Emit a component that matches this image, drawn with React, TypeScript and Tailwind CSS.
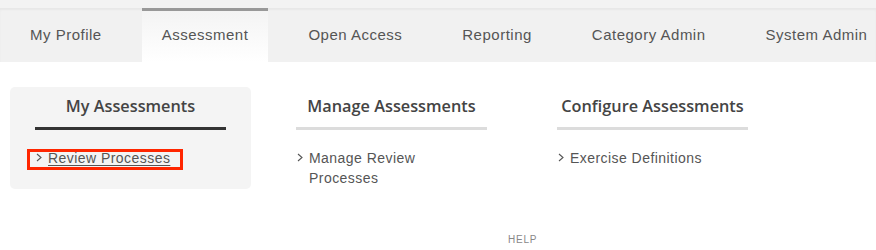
import React from 'react';

const tabs = ['My Profile', 'Assessment', 'Open Access', 'Reporting', 'Category Admin', 'System Admin'];

const columns = [
  { title: 'My Assessments', links: ['Review Processes'], active: true },
  { title: 'Manage Assessments', links: ['Manage Review Processes'], active: false },
  { title: 'Configure Assessments', links: ['Exercise Definitions'], active: false },
];

function Chevron() {
  return (
    <svg width="6" height="9" viewBox="0 0 6 9" className="shrink-0 mt-[5px]">
      <polyline points="1,1 5,4.5 1,8" fill="none" stroke="#555" strokeWidth="1.1" />
    </svg>
  );
}

export default function App() {
  return (
    <div className="w-[876px] h-[250px] bg-white overflow-hidden font-['Liberation_Sans',Arial,sans-serif]">
      <div className="h-[8px] bg-[#f3f3f3]" />
      <nav className="h-[54px] bg-[#f1f1f1] flex gap-5 pl-2.5 shadow-[inset_0_2px_2px_rgba(0,0,0,0.04)]">
        {tabs.map((t) => (
          <div
            key={t}
            className={
              'px-5 shrink-0 whitespace-nowrap flex items-center border-t-[3px] pb-[3px] text-[15px] tracking-[0.5px] text-[#555] ' +
              (t === 'Assessment'
                ? 'border-[#999] bg-gradient-to-b from-[#f4f4f4] to-white text-[#444]'
                : 'border-transparent')
            }
          >
            {t}
          </div>
        ))}
      </nav>

      <div className="h-[170px] flex gap-5 pl-2.5 pt-[25px] items-start">
        {columns.map((c) => (
          <div
            key={c.title}
            className={'w-[241px] shrink-0 px-[25px] pt-[7px] pb-[21px] rounded-[5px] ' + (c.active ? 'bg-[#f4f4f4]' : '')}
          >
            <h2
              className={
                "text-center font-['Open_Sans',sans-serif] font-semibold text-[16.3px] leading-[24px] text-[#444] pb-[9px] border-b-[3px] " +
                (c.active ? 'border-[#333]' : 'border-[#dcdcdc]')
              }
            >
              {c.title}
            </h2>
            <ul className="mt-[18px]">
              {c.links.map((l) => (
                <li key={l} className="relative flex gap-[6px] pl-px text-[14px] leading-[20px] tracking-[0.45px] text-[#555]">
                  <Chevron />
                  <span className={'max-w-[150px] ' + (c.active ? 'underline underline-offset-[2px]' : '')}>{l}</span>
                  {c.active && (
                    <span className="absolute left-[-8px] top-[1px] w-[156px] h-[21px] border-[3px] border-[#ff2600]" />
                  )}
                </li>
              ))}
            </ul>
          </div>
        ))}
      </div>

      <div className="pl-[508px] text-[10px] leading-[16px] tracking-[0.8px] text-[#888]">HELP</div>
    </div>
  );
}
